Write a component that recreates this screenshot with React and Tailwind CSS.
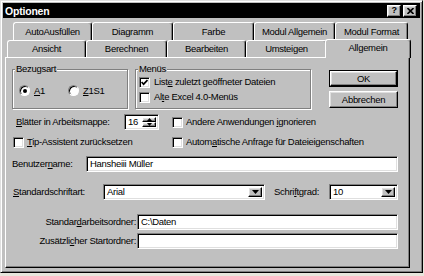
import React from "react";

const F = "font-['Liberation_Sans',Arial,sans-serif]";
const RAISED =
  "border border-t-white border-l-white border-r-black border-b-black shadow-[inset_-1px_-1px_0_#808080,inset_1px_1px_0_#dfdfdf]";
const SUNKEN =
  "border border-t-[#808080] border-l-[#808080] border-r-white border-b-white shadow-[inset_1px_1px_0_#000,inset_-1px_-1px_0_#dfdfdf]";

function U({ children }) {
  return <span className="underline underline-offset-[1px]">{children}</span>;
}

function Check({ checked }) {
  return (
    <span className={`w-[11px] h-[11px] shrink-0 bg-white flex items-center justify-center ${SUNKEN}`}>
      {checked && (
        <svg width="7" height="7" viewBox="0 0 7 7">
          <path d="M0.6 3 L2.6 5.2 L6.5 1" fill="none" stroke="#000" strokeWidth="1.7" />
        </svg>
      )}
    </span>
  );
}

function Radio({ checked }) {
  return (
    <span className="w-[11px] h-[11px] shrink-0 rounded-full bg-white border border-t-[#808080] border-l-[#808080] border-r-white border-b-white shadow-[inset_1px_1px_0_#000] flex items-center justify-center">
      {checked && <span className="w-[4px] h-[4px] rounded-full bg-black" />}
    </span>
  );
}

function DownBtn() {
  return (
    <span className={`w-[14px] h-full shrink-0 bg-[#c0c0c0] flex items-center justify-center ${RAISED}`}>
      <svg width="7" height="4" viewBox="0 0 7 4">
        <path d="M0 0 H7 L3.5 4 Z" fill="#000" />
      </svg>
    </span>
  );
}

function Combo({ w, value }) {
  return (
    <div className={`${w} h-full bg-white flex items-stretch p-[2px] ${SUNKEN}`}>
      <span className="flex-1 flex items-center pl-[1px]">{value}</span>
      <DownBtn />
    </div>
  );
}

function Field({ w, value }) {
  return (
    <div className={`${w} h-full bg-white flex items-center pl-[3px] ${SUNKEN}`}>{value}</div>
  );
}

function Tab({ w, children, selected }) {
  if (selected) {
    return (
      <div
        className={`${w} h-[19px] mb-[-1px] -ml-[2px] relative z-10 bg-[#c0c0c0] rounded-t-[3px] border-t border-l border-t-white border-l-white border-r border-r-black shadow-[inset_-1px_0_0_#808080] flex items-center justify-center pb-[2px]`}
      >
        {children}
      </div>
    );
  }
  return (
    <div
      className={`${w} h-full bg-[#c0c0c0] rounded-t-[3px] border-t border-l border-t-white border-l-white border-r border-r-black shadow-[inset_-1px_0_0_#808080] flex items-center justify-center`}
    >
      {children}
    </div>
  );
}

export default function App() {
  return (
    <div className={`w-[424px] h-[276px] bg-[#e8e6dc] ${F} text-[9.5px] tracking-[-0.3px] leading-[12px] text-black`}>
      <div className="w-[423px] h-[273px] bg-[#c0c0c0] p-[2px] border border-t-[#dfdfdf] border-l-[#dfdfdf] border-r-black border-b-black shadow-[inset_1px_1px_0_#fff,inset_-1px_-1px_0_#808080]">
        {/* Title bar */}
        <div className="h-[15px] bg-black flex items-center justify-between">
          <span className="pl-[2px] text-white font-bold text-[10.5px] tracking-[-0.2px]">Optionen</span>
          <div className="flex gap-[2px] mr-[3px]">
            <span className={`w-[14px] h-[12px] bg-[#c0c0c0] flex items-center justify-center font-bold text-[9px] leading-[9px] ${RAISED}`}>
              ?
            </span>
            <span className={`w-[14px] h-[12px] bg-[#c0c0c0] flex items-center justify-center ${RAISED}`}>
              <svg width="7" height="6" viewBox="0 0 7 6">
                <path d="M0.5 0 L6.5 6 M6.5 0 L0.5 6" stroke="#000" strokeWidth="1.6" />
              </svg>
            </span>
          </div>
        </div>

        {/* Tabs + panel */}
        <div className="ml-[2px] mt-[4px]">
          <div className="flex h-[18px] pl-[8px]">
            <Tab w="w-[79px]">AutoAusfüllen</Tab>
            <Tab w="w-[81px]">Diagramm</Tab>
            <Tab w="w-[81px]">Farbe</Tab>
            <Tab w="w-[81px]">Modul Allgemein</Tab>
            <Tab w="w-[73px]">Modul Format</Tab>
          </div>
          <div className="flex h-[17px] pl-[2px] items-end">
            <Tab w="w-[79px]">Ansicht</Tab>
            <Tab w="w-[81px]">Berechnen</Tab>
            <Tab w="w-[79px]">Bearbeiten</Tab>
            <Tab w="w-[81px]">Umsteigen</Tab>
            <Tab w="w-[86px]" selected>
              Allgemein
            </Tab>
          </div>

          <div className="w-[405px] h-[211px] border border-t-white border-l-white border-r-black border-b-black shadow-[inset_-1px_-1px_0_#808080] pl-[6px]">
            {/* Row A */}
            <div className="flex mt-[6px]">
              <fieldset className="w-[116px] h-[45px] border border-[#808080] shadow-[inset_1px_1px_0_#fff,1px_1px_0_#fff] px-0">
                <legend className="ml-[2px] px-[1px] bg-[#c0c0c0] leading-[10px]">Bezugsart</legend>
                <div className="h-[33px] flex items-center pl-[6px]">
                  <Radio checked />
                  <span className="ml-[4px] w-[34px]">
                    <U>A</U>1
                  </span>
                  <Radio />
                  <span className="ml-[4px]">
                    <U>Z</U>1S1
                  </span>
                </div>
              </fieldset>
              <fieldset className="ml-[7px] w-[176px] h-[45px] border border-[#808080] shadow-[inset_1px_1px_0_#fff,1px_1px_0_#fff] px-0">
                <legend className="ml-[2px] px-[1px] bg-[#c0c0c0] leading-[10px]">Menüs</legend>
                <div className="pt-[2px] pl-[3px] flex flex-col gap-[3px]">
                  <div className="h-[12px] flex items-center gap-[4px]">
                    <Check checked />
                    <span>
                      List<U>e</U> zuletzt geöffneter Dateien
                    </span>
                  </div>
                  <div className="h-[12px] flex items-center gap-[4px]">
                    <Check />
                    <span>
                      Al<U>t</U>e Excel 4.0-Menüs
                    </span>
                  </div>
                </div>
              </fieldset>
              <div className="ml-[18px] w-[69px] pt-[6px] flex flex-col gap-[4px]">
                <div className="h-[17px] border border-black">
                  <div className={`h-full bg-[#c0c0c0] flex items-center justify-center ${RAISED}`}>OK</div>
                </div>
                <div className={`h-[17px] bg-[#c0c0c0] flex items-center justify-center ${RAISED}`}>Abbrechen</div>
              </div>
            </div>

            {/* Row B */}
            <div className="flex items-center h-[16px] mt-[5px]">
              <span className="ml-[4px] w-[108px]">
                <U>B</U>lätter in Arbeitsmappe:
              </span>
              <div className={`w-[35px] h-full bg-white flex items-stretch p-[2px] ${SUNKEN}`}>
                <span className="flex-1 flex items-center pl-[1px]">16</span>
                <div className="w-[14px] flex flex-col">
                  <span className={`flex-1 bg-[#c0c0c0] flex items-center justify-center ${RAISED}`}>
                    <svg width="5" height="3" viewBox="0 0 5 3">
                      <path d="M0 3 H5 L2.5 0 Z" fill="#000" />
                    </svg>
                  </span>
                  <span className={`flex-1 bg-[#c0c0c0] flex items-center justify-center ${RAISED}`}>
                    <svg width="5" height="3" viewBox="0 0 5 3">
                      <path d="M0 0 H5 L2.5 3 Z" fill="#000" />
                    </svg>
                  </span>
                </div>
              </div>
              <div className="ml-[13px] flex items-center gap-[3px]">
                <Check />
                <span>
                  Andere Anwendungen <U>i</U>gnorieren
                </span>
              </div>
            </div>

            {/* Row C */}
            <div className="flex items-center h-[12px] mt-[6px]">
              <div className="ml-[1px] w-[159px] flex items-center gap-[3px]">
                <Check />
                <span>
                  <U>T</U>ip-Assistent zurücksetzen
                </span>
              </div>
              <div className="flex items-center gap-[3px]">
                <Check />
                <span>
                  Autom<U>a</U>tische Anfrage für Dateieigenschaften
                </span>
              </div>
            </div>

            {/* Row D */}
            <div className="flex items-center h-[16px] mt-[8px]">
              <span className="w-[74px]">
                Benutzer<U>n</U>ame:
              </span>
              <Field w="w-[312px]" value="Hansheiii Müller" />
            </div>

            {/* Row E */}
            <div className="flex items-center h-[16px] mt-[12px]">
              <span className="ml-[1px] w-[90px]">
                <U>S</U>tandardschriftart:
              </span>
              <Combo w="w-[162px]" value="Arial" />
              <span className="ml-[9px] w-[55px]">
                Schri<U>f</U>tgrad:
              </span>
              <Combo w="w-[69px]" value="10" />
            </div>

            {/* Row F */}
            <div className="flex items-center h-[16px] mt-[14px]">
              <span className="w-[125px] text-right pr-[1px]">
                Standar<U>d</U>arbeitsordner:
              </span>
              <Field w="w-[261px]" value="C:\Daten" />
            </div>

            {/* Row G */}
            <div className="flex items-center h-[16px] mt-[3px]">
              <span className="w-[125px] text-right pr-[1px]">
                Zusätzli<U>c</U>her Startordner:
              </span>
              <Field w="w-[261px]" value="" />
            </div>
          </div>
        </div>
      </div>
    </div>
  );
}
